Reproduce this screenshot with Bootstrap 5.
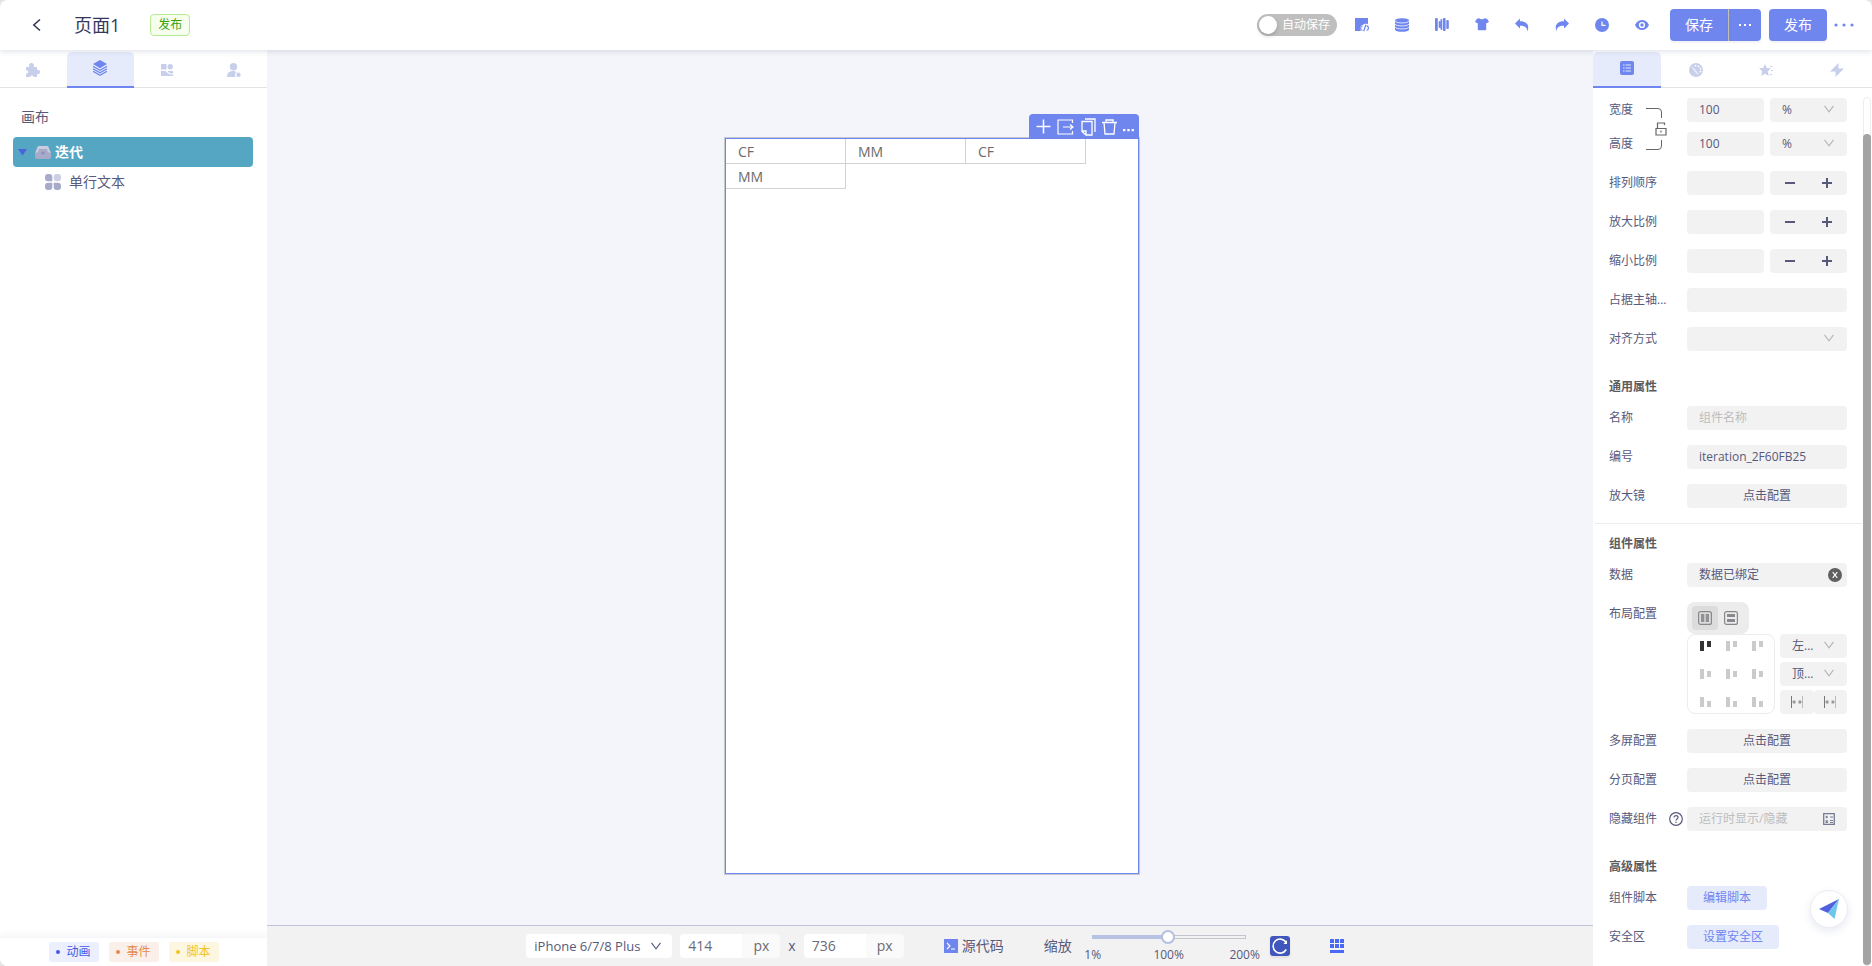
<!DOCTYPE html>
<html lang="zh-CN">
<head>
<meta charset="utf-8">
<meta name="viewport" content="width=device-width, initial-scale=1">
<title>页面1</title>
<link href="https://cdn.jsdelivr.net/npm/bootstrap@5.3.0/dist/css/bootstrap.min.css" rel="stylesheet">
<style>
:root{--main:#6f86ef;--ink:#57597b;--soft:#f2f2f2;--pale:#e6ebfc;--dim:#c8cfeb}
body{font-family:"Open Sans","Noto Sans CJK SC",sans-serif;font-size:12px;line-height:20px;color:var(--ink);background:#e4e4e6}
svg{display:block;flex:none}
button,input,select{font-family:inherit;color:inherit}
.app{background:#fff;border-radius:8px 8px 0 8px;overflow:hidden}
/* header */
.topbar{height:50px;z-index:5;box-shadow:0 1px 6px rgba(40,50,90,.16);position:relative}
.back{width:16px;margin-left:29px;color:#2f3454}
.page-name{font-size:18px;line-height:28px;color:#34385c;margin-left:29px;font-weight:400}
.state{margin-left:30px;height:22px;padding:0 7px;border:1px solid #b7eb8f;background:#f6ffed;color:#3aa010;border-radius:4px}
.autosave{width:80px;height:22px;border-radius:11px;background:#bfbfbf;color:#fff;padding:0 7px 0 2px;margin-right:5px;cursor:pointer}
.autosave input{appearance:none;width:18px;height:18px;border-radius:50%;background:#fff;margin:0;box-shadow:0 2px 4px rgba(0,35,11,.2)}
.tool{width:40px;height:32px;padding:0;border:0;background:none;color:var(--main);display:flex;align-items:center;justify-content:center}
.btn-main{--bs-btn-color:#fff;--bs-btn-bg:var(--main);--bs-btn-hover-bg:#5d75e4;--bs-btn-hover-color:#fff;--bs-btn-border-color:var(--main);height:32px;font-size:14px;line-height:20px;padding:0;border:0;border-radius:4px;width:58px;box-shadow:0 2px 2px rgba(0,0,0,.05);display:flex;align-items:center;justify-content:center}
.btn-main.rest{width:33px;border-left:1px solid #c2c0b4}
.dots{width:34px;margin-right:11px}
/* tabs */
.tabbar{height:38px;padding-top:2px;border-bottom:1px solid #e3e3e6;flex:none}
.tabbar button{border:0;background:none;color:var(--dim);padding:0;display:flex;align-items:center;justify-content:center;flex:1 1 0;height:36px}
.tabbar button.on{background:var(--pale);color:var(--main);border-radius:5px 5px 0 0;border-bottom:2px solid var(--main);padding-bottom:2px}
.side-l{width:267px;flex:none}
.tree{padding:19px 13px;font-size:14px}
.tree-root{padding:0 8px;line-height:20px;margin-bottom:10px}
.tree .node{height:30px;border-radius:4px;margin-right:1px}
.tree .picked{background:#55a6c3;color:#fff;font-weight:700;padding-left:5px}
.legend-row{height:29px;border-top:1px solid #f5f5fa;box-shadow:0 -3px 6px rgba(60,70,120,.05);gap:10px}
.chip{height:20px;width:50px;border-radius:3px;gap:6px}
.chip::before{content:"";width:4px;height:4px;border-radius:50%;background:currentColor}
.chip.c1{background:#ebeffe;color:#4359e6}.chip.c2{background:#faefe9;color:#e28c4f}.chip.c3{background:#fdf6e1;color:#f2c522}
/* stage */
.stage{background:#f4f5fa;min-width:0}
.board{padding:88px 0 0 4px}
.phone{width:414px;height:736px;background:#fff;border:1px solid var(--main);box-shadow:0 0 0 1px #c6c8d0;position:relative}
.float-tools{position:absolute;right:-1px;top:-25px;height:25px;width:110px;background:var(--main);border-radius:4px 4px 0 0;color:#fff;padding:0 5px 0 7px}
.float-tools button{border:0;background:none;padding:0;color:#fff}
.cells{padding-right:36px}
.cell-item{width:120px;height:25px;border:1px solid #d2d2d2;border-top:0;border-left:0;font-size:14px;color:#6b6b6b;padding-left:12px;line-height:26px}
.dock{height:41px;background:var(--soft);border-top:1px solid #c0c4d8;font-size:14px;padding-left:50px}
.dock select,.dock input[type=text]{height:24px;border:0;background:#fff;font-size:14px;line-height:24px;color:#6b6b76}
.dock .pick{position:relative;margin-right:8px}
.dock select{appearance:none;width:146px;border-radius:4px;padding:0 8px;color:var(--ink);font-size:13px}
.dock .pick svg{position:absolute;right:11px;top:8px;pointer-events:none}
.dock input[type=text]{width:62px;border-radius:4px 0 0 4px;padding:0 8px}
.unit{width:38px;height:24px;line-height:24px;background:#fafafa;border-radius:0 4px 4px 0;text-align:center;color:#6b6b76}
.zoomer{width:184px;height:40px;margin:0 9px 0 5px}
.zoomer input{appearance:none;display:block;width:154px;height:14px;margin:4px 15px 0;background:linear-gradient(90deg,#b7c1e2 50%,transparent 50%) center/100% 4px no-repeat,linear-gradient(#f2f2f2,#f2f2f2) center/152px 2px no-repeat,linear-gradient(#c3c5cd,#c3c5cd) center/100% 4px no-repeat}
.zoomer input::-webkit-slider-thumb{appearance:none;width:14px;height:14px;border-radius:50%;border:2px solid #b4bfe2;background:#fff}
.zoomer output{width:32px;text-align:center;font-size:12px;line-height:16px;margin-top:3px}
.reload{width:20px;height:20px;border:0;padding:0;border-radius:3px;background:#4156bd;color:#fff;box-shadow:0 2px 3px rgba(0,0,0,.08)}
.grid-toggle{width:94px}
/* properties */
.side-r{width:279px;flex:none;position:relative}
.side-r .tabbar button.on{flex:0 0 68px}
.props{padding:10px 25px 0 16px;overflow:hidden}
.prop{display:flex;min-height:24px;margin-bottom:15px}
.prop.tight{margin-bottom:10px}
.prop>.cap{width:78px;flex:none;line-height:24px}
.prop .body{width:160px;gap:6px}
.box{height:24px;border:0;border-radius:4px;background:var(--soft);font-size:12px;line-height:24px;padding:0 12px;min-width:0;width:100%}
.box::placeholder{color:#bdbdbd;opacity:1}
.half{width:77px;flex:none}
.sel{position:relative}
.sel select{appearance:none}
.sel svg{position:absolute;right:13px;top:7px;pointer-events:none}
.sel svg.tail{right:12px;top:6px}
.sel svg.clear{right:5px;top:5px}
.step{display:flex;padding:0 15px;justify-content:space-between;align-items:center}
.step button{border:0;background:none;padding:0}
.sect{height:40px;padding-top:11px;font-size:12px;line-height:20px;font-weight:700;color:#5c5c60;margin:0}
.sect.ruled{border-top:1px solid #ececec;margin:0 -15px 0 -14px;padding:10px 14px 0}
.lock-link{position:absolute;left:37px;top:9px}
.switcher{width:62px;height:32px;border-radius:8px;background:#ececec;padding:4px 5px}
.switcher button{border:0;background:none;width:26px;height:24px;border-radius:4px;padding:0;display:flex;align-items:center;justify-content:center}
.switcher button.on{background:#dcdcdc}
.aligner{width:88px;height:80px;border:1px solid #ececec;border-radius:8px;padding:6px 12px;display:grid;grid-template-columns:repeat(3,11px);gap:18px 15px}
.aligner button{border:0;background:none;padding:0;height:10px;display:flex;gap:3px;color:#cbcbcb}
.aligner button.on{color:#333}
.aligner i{width:4px;height:10px;background:currentColor}
.aligner i+i{height:6px}
.pair{width:67px}
.small-act{border:0;background:var(--soft);border-radius:4px;height:24px;flex:1;padding:0;display:flex;align-items:center;justify-content:center}
.link-btn{border:0;height:24px;border-radius:4px;background:var(--pale);color:var(--main);padding:0 16px;font-size:12px}
.scroll-track{position:absolute;right:1px;top:47px;bottom:0;width:8px;border:1px solid #ededed;border-radius:4px}
.scroll-thumb{position:absolute;left:-1px;right:-1px;top:36px;bottom:0;background:#a3a3a3;border-radius:4px}
.help-plane{position:absolute;right:24px;bottom:38px;width:38px;height:38px;border-radius:50%;background:#fff;border:1px solid #ececf4;box-shadow:0 3px 8px rgba(60,70,140,.12);padding:0;display:flex;align-items:center;justify-content:center}
</style>
<script src="https://cdn.jsdelivr.net/npm/bootstrap@5.3.0/dist/js/bootstrap.bundle.min.js"></script>
</head>
<body>
<svg width="0" height="0" class="position-absolute">
<symbol id="chev" viewBox="0 0 10 8"><path d="M.5.8 5 6.8 9.500.8" fill="none" stroke="currentColor" stroke-width="1.100"/></symbol>
<symbol id="minus" viewBox="0 0 10 10"><path d="M0 4h10v2H0z" fill="currentColor"/></symbol>
<symbol id="plus" viewBox="0 0 10 10"><path d="M0 4h4V0h2v4h4v2H6v4H4V6H0z" fill="currentColor"/></symbol>
</svg>
<div class="app vh-100 d-flex flex-column">
<header class="topbar d-flex align-items-center bg-white flex-shrink-0">
  <button class="back border-0 bg-transparent p-0" aria-label="返回"><svg width="16" height="14" viewBox="0 0 16 14"><path d="M11 1.500 4.800 7l6.200 5.500" fill="none" stroke="currentColor" stroke-width="1.500"/></svg></button>
  <h1 class="page-name mb-0">页面1</h1>
  <span class="state">发布</span>
  <div class="d-flex align-items-center ms-auto">
    <label class="autosave d-flex align-items-center justify-content-between"><input type="checkbox" role="switch">自动保存</label>
    <button class="tool" aria-label="页面代码"><svg width="16" height="16" viewBox="0 0 16 16"><path d="M1 1h13v6.300c-2-1-4.500-.4-5 .8-3 0-4 3.900-2 5.900H1z" fill="currentColor"/><g fill="none" stroke="currentColor" stroke-width="1.200"><path d="M8.500 9C6 9.300 6 13.300 8.500 13.500M11.800 7.800 9.700 14.200M12.500 8.800c2.600.2 2.600 4.400 0 4.700"/></g></svg></button>
    <button class="tool" aria-label="数据"><svg width="16" height="16" viewBox="0 0 16 16"><path d="M1 3.500C1 .4 15 .4 15 3.500v9c0 3.100-14 3.100-14 0z" fill="currentColor"/><path d="M1 4c1 2.600 13 2.600 14 0M1 7c1 2.600 13 2.600 14 0M1 10c1 2.600 13 2.600 14 0" fill="none" stroke="#fff" stroke-width=".8"/></svg></button>
    <button class="tool" aria-label="对齐"><svg width="16" height="16" viewBox="0 0 16 16" fill="currentColor"><rect x="1" y="1" width="2.800" height="13" rx="1"/><rect x="4.700" y="4" width="2.200" height="7" rx="1"/><rect x="6.500" y="2" width="1.600" height="11" rx=".8"/><rect x="8.800" y="1" width="2.800" height="13" rx="1"/><rect x="12.300" y="3" width="2.500" height="9" rx="1"/></svg></button>
    <button class="tool" aria-label="主题"><svg width="16" height="16" viewBox="0 0 16 16"><path d="M5.500 1.200c1 1.300 4 1.300 5 0L13 1.800 15 4.800l-2.300 1.500-.5-.3v6.500c0 .5-.3.800-.8.800H4.600c-.5 0-.8-.3-.8-.8V6l-.5.300L1 4.800l2-3z" fill="currentColor"/></svg></button>
    <button class="tool" aria-label="撤销"><svg width="16" height="16" viewBox="0 0 16 16"><path d="M1 6.500 6 1.500v2.700c7-.2 10 4.500 7.200 10.300C13.500 10.500 11 8.700 6 8.800v2.700z" fill="currentColor"/></svg></button>
    <button class="tool" aria-label="重做"><svg width="16" height="16" viewBox="0 0 16 16"><path d="M15 6.500 10 1.500v2.700C3 4-.1 8.700 2.800 14.500 2.500 10.500 5 8.700 10 8.800v2.700z" fill="currentColor"/></svg></button>
    <button class="tool" aria-label="历史"><svg width="14" height="14" viewBox="0 0 14 14"><circle cx="7" cy="7" r="7" fill="currentColor"/><path d="M7 3.500v3.800h3.500" fill="none" stroke="#fff" stroke-width="1.200"/></svg></button>
    <button class="tool" aria-label="预览"><svg width="14" height="14" viewBox="0 0 14 14"><path d="M0 7C3 .2 11 .2 14 7 11 13.800 3 13.800 0 7z" fill="currentColor"/><circle cx="7" cy="7" r="2.400" fill="currentColor" stroke="#fff" stroke-width="1.400"/></svg></button>
    <div class="d-flex ms-2">
      <button class="btn btn-main rounded-end-0">保存</button>
      <button class="btn btn-main rest rounded-start-0 me-2" aria-label="更多保存"><svg width="14" height="2" viewBox="0 0 14 2" fill="#fff"><path d="M1 0h2v2H1zM6 0h2v2H6zM11 0h2v2h-2z"/></svg></button>
      <button class="btn btn-main">发布</button>
    </div>
    <button class="tool dots" aria-label="更多"><svg width="20" height="4" viewBox="0 0 20 4" fill="currentColor"><circle cx="2" cy="2" r="1.600"/><circle cx="10" cy="2" r="1.600"/><circle cx="18" cy="2" r="1.600"/></svg></button>
  </div>
</header>
<div class="d-flex flex-grow-1 overflow-hidden">
<aside class="side-l d-flex flex-column bg-white">
  <div class="tabbar d-flex">
    <button aria-label="组件"><svg width="14" height="14" viewBox="0 0 14 14" fill="currentColor"><path d="M0 4h3.300C2.500 1.500 3.800 0 5.500 0s3 1.500 2.300 4H11v3c2-.6 3 .5 3 2s-1 2.500-3 2v3H7.500c.2-2-3.200-2-3.200 0H0v-3.500c3 .3 3-3.600 0-3.300z"/></svg></button>
    <button class="on" aria-label="图层"><svg width="14" height="16" viewBox="0 0 14 16"><path d="m7 0 7 4-7 4.200L0 4z" fill="currentColor"/><path d="m0 6.300 7 4 7-4M0 8.800l7 4 7-4M0 11.200l7 4 7-4" fill="none" stroke="currentColor" stroke-width="1.200"/></svg></button>
    <button aria-label="模板"><svg width="12" height="12" viewBox="0 0 12 12" fill="currentColor"><rect width="5.500" height="5.500"/><circle cx="9.200" cy="2.700" r="2.700"/><path d="M0 7h4.500c2 3 5 3.500 7.500 3.500V12H0zM6.500 7H12v2.500C9.500 9.500 7.500 9 6.500 7z"/></svg></button>
    <button aria-label="用户"><svg width="14" height="14" viewBox="0 0 14 14" fill="currentColor"><circle cx="6.500" cy="3.700" r="3.700"/><path d="M0 14c0-4 2-6 6-6 2 0 3 .5 3.500 1.500C8 10 7.500 11 8.500 14z"/><circle cx="11.500" cy="11.800" r="2.200"/></svg></button>
  </div>
  <nav class="tree flex-grow-1">
    <div class="tree-root">画布</div>
    <div class="node picked d-flex align-items-center">
      <svg width="9" height="7" viewBox="0 0 9 7"><path d="M0 0h9L4.500 6.500z" fill="#4a63d8"/></svg>
      <svg class="mx-2 me-1" width="16" height="13" viewBox="0 0 16 13"><path d="M3 0h10l3 7H0z" fill="#c9cbe0"/><path d="M0 6.500h3L4 3h8l1 3.500h3V11c0 1.300-.7 2-2 2H2c-1.300 0-2-.7-2-2z" fill="#a7abc9"/><circle cx="8" cy="7" r="1.600" fill="#8c90b4"/></svg>
      <span>迭代</span>
    </div>
    <div class="node d-flex align-items-center ps-4">
      <svg class="mx-2" width="16" height="16" viewBox="0 0 16 16" fill="#a7abc9"><rect x="0" y="0" width="7.300" height="7.300" rx="3"/><path d="M5 5h2.300v2.300H5z"/><rect x="8.700" y="0" width="7.300" height="7.300" rx="3" fill="#cdd0e4"/><rect x="0" y="8.700" width="7.300" height="7.300" rx="3"/><rect x="8.700" y="8.700" width="7.300" height="7.300" rx="3"/><path d="M5 8.700h2.300V11H5zM8.700 8.700H11V11H8.700z"/></svg>
      <span>单行文本</span>
    </div>
  </nav>
  <div class="legend-row d-flex align-items-center justify-content-center flex-shrink-0">
    <span class="chip c1 d-flex align-items-center justify-content-center">动画</span>
    <span class="chip c2 d-flex align-items-center justify-content-center">事件</span>
    <span class="chip c3 d-flex align-items-center justify-content-center">脚本</span>
  </div>
</aside>
<main class="stage flex-grow-1 d-flex flex-column">
  <div class="board flex-grow-1 d-flex justify-content-center align-items-start">
    <div class="phone">
      <div class="float-tools d-flex align-items-center justify-content-between">
        <button aria-label="添加"><svg width="15" height="15" viewBox="0 0 15 15"><path d="M7.500.5v14M.5 7.500h14" stroke="currentColor" stroke-width="1.500"/></svg></button>
        <button aria-label="导出"><svg width="17" height="16" viewBox="0 0 17 16" fill="none" stroke="currentColor" stroke-width="1.200"><path d="M15.500 4V1H1v14h14.500v-3M6 8h10M13 5.500 16 8l-3 2.500"/></svg></button>
        <button aria-label="复制"><svg width="15" height="18" viewBox="0 0 15 18" fill="none" stroke="currentColor" stroke-width="1.300"><path d="M1 3.500h10v13.500H5L1 13.500zM1 13h4v4M4 1h10v13"/></svg></button>
        <button aria-label="删除"><svg width="15" height="16" viewBox="0 0 15 16" fill="none" stroke="currentColor" stroke-width="1.300"><path d="M0 3.500h15M4 3.500V1h7v2.500M2 3.500 3 15h9l1-11.500"/></svg></button>
        <button class="pt-2" aria-label="更多"><svg width="11" height="3" viewBox="0 0 11 3" fill="currentColor"><path d="M0 0h2.300v2.300H0zM4.300 0h2.300v2.300H4.300zM8.600 0h2.300v2.300H8.600z"/></svg></button>
      </div>
      <div class="cells d-flex flex-wrap">
        <div class="cell-item">CF</div><div class="cell-item">MM</div><div class="cell-item">CF</div><div class="cell-item">MM</div>
      </div>
    </div>
  </div>
  <div class="dock d-flex align-items-center justify-content-center flex-shrink-0">
    <div class="pick"><select aria-label="设备"><option>iPhone 6/7/8 Plus</option></select><svg width="10" height="8"><use href="#chev"/></svg></div>
    <input type="text" value="414" aria-label="宽"><span class="unit">px</span>
    <span class="px-2">x</span>
    <input type="text" value="736" aria-label="高"><span class="unit">px</span>
    <button class="border-0 bg-transparent p-0 d-flex align-items-center gap-1 ms-4 ps-3"><svg width="14" height="14" viewBox="0 0 14 14"><path d="M0 0h14v14H0z" fill="#6f86ef"/><path d="m3 4 3 3-3 3M7 10h4" fill="none" stroke="#fff" stroke-width="1.100"/></svg>源代码</button>
    <label class="ms-4 ps-3" for="zoom">缩放</label>
    <div class="zoomer"><input type="range" id="zoom" min="1" max="200" value="100"><div class="d-flex justify-content-between"><output>1%</output><output>100%</output><output>200%</output></div></div>
    <button class="reload" aria-label="刷新"><svg width="20" height="20" viewBox="0 0 20 20"><path d="M15.800 6A7 7 0 1 0 16.200 13.500" fill="none" stroke="currentColor" stroke-width="1.600"/><path d="M17 4v4h-3.500z" fill="currentColor"/></svg></button>
    <button class="tool grid-toggle" aria-label="网格"><svg width="14" height="14" viewBox="0 0 14 14" fill="#4a6af5"><path d="M0 0h4v4H0zM5 0h4v4H5zM10 0h4v4h-4zM0 5h4v4H0zM5 5h4v4H5zM10 5h4v4h-4zM0 11h14v3H0z"/></svg></button>
  </div>
</main>
<aside class="side-r d-flex flex-column bg-white">
  <div class="tabbar d-flex">
    <button class="on" aria-label="属性"><svg width="14" height="14" viewBox="0 0 14 14"><rect width="14" height="14" rx="2" fill="currentColor"/><path d="M3 4h1.500M5.500 4H11M3 7h1.500M5.500 7H11M3 10h1.500M5.500 10H11" stroke="#dfe5ff"/></svg></button>
    <button aria-label="样式"><svg width="14" height="14" viewBox="0 0 14 14"><circle cx="7" cy="7" r="7" fill="currentColor"/><g fill="#fff"><circle cx="6.500" cy="2.700" r=".9"/><circle cx="9.500" cy="3.300" r=".9"/><circle cx="11.500" cy="5.700" r=".9"/><circle cx="11.500" cy="8.500" r=".9"/><path d="M1.500 2.500 6 6l2 3 2 2-1.500.5L5.500 8.500z" opacity=".6"/></g></svg></button>
    <button aria-label="收藏"><svg width="14" height="14" viewBox="0 0 14 14" fill="currentColor"><path d="m6 1 1.800 4 4.200.3-3.200 3 1 4.700L6 10.800 2.200 13l1-4.700L0 5.300 4.200 5z"/><path d="M11 3h2v1h-2zM12 7h2v1h-2zM11 11h2v1h-2z"/></svg></button>
    <button aria-label="事件"><svg width="14" height="14" viewBox="0 0 14 14" fill="currentColor"><path d="M8.500 0 0 8.500h5.500L5.500 14 14 5.500H8.500z"/></svg></button>
  </div>
  <div class="props flex-grow-1">
    <div class="position-relative">
      <div class="prop tight"><label class="cap" for="w">宽度</label><div class="body d-flex"><input id="w" class="box half" value="100"><div class="sel flex-grow-1"><select class="box" aria-label="宽度单位"><option>%</option></select><svg width="10" height="8" color="#b5b5b5"><use href="#chev"/></svg></div></div></div>
      <div class="prop"><label class="cap" for="h">高度</label><div class="body d-flex"><input id="h" class="box half" value="100"><div class="sel flex-grow-1"><select class="box" aria-label="高度单位"><option>%</option></select><svg width="10" height="8" color="#b5b5b5"><use href="#chev"/></svg></div></div></div>
      <svg class="lock-link" width="21" height="44" viewBox="0 0 21 44" fill="none" stroke="#666"><path d="M0 1.500h12q3.500 0 3.500 3.500v6M0 42.500h12q3.500 0 3.500-3.500v-6"/><path d="M10 21.500h10v6.500H10zM11.500 21.500v-5.500h7v2M15 23.500v2" stroke-width="1.200"/></svg>
    </div>
    <div class="prop"><label class="cap" for="o">排列顺序</label><div class="body d-flex"><input id="o" class="box half"><div class="box step"><button aria-label="减"><svg width="10" height="10"><use href="#minus"/></svg></button><button aria-label="加"><svg width="10" height="10"><use href="#plus"/></svg></button></div></div></div>
    <div class="prop"><label class="cap" for="g">放大比例</label><div class="body d-flex"><input id="g" class="box half"><div class="box step"><button aria-label="减"><svg width="10" height="10"><use href="#minus"/></svg></button><button aria-label="加"><svg width="10" height="10"><use href="#plus"/></svg></button></div></div></div>
    <div class="prop"><label class="cap" for="s">缩小比例</label><div class="body d-flex"><input id="s" class="box half"><div class="box step"><button aria-label="减"><svg width="10" height="10"><use href="#minus"/></svg></button><button aria-label="加"><svg width="10" height="10"><use href="#plus"/></svg></button></div></div></div>
    <div class="prop"><label class="cap" for="b">占据主轴...</label><div class="body"><input id="b" class="box"></div></div>
    <div class="prop"><label class="cap" for="al">对齐方式</label><div class="body sel"><select id="al" class="box"><option></option></select><svg width="10" height="8" color="#b5b5b5"><use href="#chev"/></svg></div></div>
    <h2 class="sect">通用属性</h2>
    <div class="prop"><label class="cap" for="n">名称</label><div class="body"><input id="n" class="box" placeholder="组件名称"></div></div>
    <div class="prop"><label class="cap" for="id">编号</label><div class="body"><input id="id" class="box" value="iteration_2F60FB25"></div></div>
    <div class="prop"><span class="cap">放大镜</span><div class="body"><button class="box">点击配置</button></div></div>
    <h2 class="sect ruled">组件属性</h2>
    <div class="prop"><label class="cap" for="d">数据</label><div class="body sel"><input id="d" class="box" value="数据已绑定"><svg class="clear" width="14" height="14" viewBox="0 0 14 14"><circle cx="7" cy="7" r="7" fill="#606060"/><path d="m4.700 4.200 4.600 5.600M9.300 4.200 4.700 9.800" stroke="#fff" stroke-width="1.100"/></svg></div></div>
    <div class="prop"><span class="cap">布局配置</span><div class="body">
      <div class="switcher d-flex"><button class="on" aria-label="横向"><svg width="14" height="14" viewBox="0 0 14 14"><rect x=".6" y=".6" width="12.800" height="12.800" rx="2" fill="none" stroke="#888" stroke-width="1.200"/><path d="M3 3h3.300v8H3zM7.700 3H11v8H7.700z" fill="#909096"/></svg></button><button aria-label="纵向"><svg width="14" height="14" viewBox="0 0 14 14"><rect x=".6" y=".6" width="12.800" height="12.800" rx="2" fill="none" stroke="#888" stroke-width="1.200"/><path d="M3 3h8v3H3zM3 8h8v3H3z" fill="#88888e"/></svg></button></div>
      <div class="d-flex justify-content-between">
        <div class="aligner">
          <button class="on align-items-start" aria-label="左上"><i></i><i></i></button><button class="align-items-start" aria-label="中上"><i></i><i></i></button><button class="align-items-start" aria-label="右上"><i></i><i></i></button>
          <button class="align-items-center" aria-label="左中"><i></i><i></i></button><button class="align-items-center" aria-label="居中"><i></i><i></i></button><button class="align-items-center" aria-label="右中"><i></i><i></i></button>
          <button class="align-items-end" aria-label="左下"><i></i><i></i></button><button class="align-items-end" aria-label="中下"><i></i><i></i></button><button class="align-items-end" aria-label="右下"><i></i><i></i></button>
        </div>
        <div class="pair d-flex flex-column justify-content-between">
          <div class="sel"><select class="box d-block" aria-label="水平"><option>左...</option></select><svg width="10" height="8" color="#b5b5b5"><use href="#chev"/></svg></div>
          <div class="sel"><select class="box d-block" aria-label="垂直"><option>顶...</option></select><svg width="10" height="8" color="#b5b5b5"><use href="#chev"/></svg></div>
          <div class="d-flex"><button class="small-act" aria-label="左间距"><svg width="12" height="12" viewBox="0 0 12 12"><path d="M.5 0v12" stroke="#777"/><path d="M11.500 0v12" stroke="#bbb"/><path d="M1 6h3m4 0h3" stroke="#aaa"/><path d="M2 4.500h2.500v3H2zM7.500 4.500H10v3H7.500z" fill="#999"/></svg></button><button class="small-act" aria-label="右间距"><svg width="12" height="12" viewBox="0 0 12 12"><path d="M.5 0v12" stroke="#777"/><path d="M11.500 0v12" stroke="#bbb"/><path d="M1 6h3m4 0h3" stroke="#aaa"/><path d="M2 4.500h2.500v3H2zM7.500 4.500H10v3H7.500z" fill="#999"/></svg></button></div>
        </div>
      </div>
    </div></div>
    <div class="prop"><span class="cap">多屏配置</span><div class="body"><button class="box">点击配置</button></div></div>
    <div class="prop"><span class="cap">分页配置</span><div class="body"><button class="box">点击配置</button></div></div>
    <div class="prop"><label class="cap d-flex align-items-center justify-content-between pe-1" for="hide">隐藏组件<svg width="14" height="14" viewBox="0 0 14 14" fill="none" stroke="currentColor" stroke-width="1.200"><circle cx="7" cy="7" r="6.300"/><path d="M5 5.500c0-2.500 4-2.500 4 0C9 7 7 6.800 7 8.500M7 9.700v1.200"/></svg></label><div class="body sel"><input id="hide" class="box" placeholder="运行时显示/隐藏"><svg class="tail" width="12" height="12" viewBox="0 0 12 12" fill="none" stroke="#777b92"><path d="M.7.700h10.600v10.600H.700z" stroke-width="1.300"/><path d="M2.500 4h2.500M3.700 2.700v2.500M7 4h3M2.500 7.500l2.500 2M5 7.500l-2.500 2M7 7.500h3M7 9.500h3" stroke-width="1.100"/></svg></div></div>
    <h2 class="sect">高级属性</h2>
    <div class="prop"><span class="cap">组件脚本</span><div class="body"><button class="link-btn">编辑脚本</button></div></div>
    <div class="prop"><span class="cap">安全区</span><div class="body"><button class="link-btn">设置安全区</button></div></div>
  </div>
  <div class="scroll-track"><div class="scroll-thumb"></div></div>
  <button class="help-plane" aria-label="帮助"><svg width="20" height="20" viewBox="0 0 20 20"><path d="M20 0 0 10l9 4z" fill="#5160dc"/><path d="M20 0 9 14l6.500 6z" fill="#6fc6ec"/></svg></button>
</aside>
</div>
</div>
</body>
</html>
